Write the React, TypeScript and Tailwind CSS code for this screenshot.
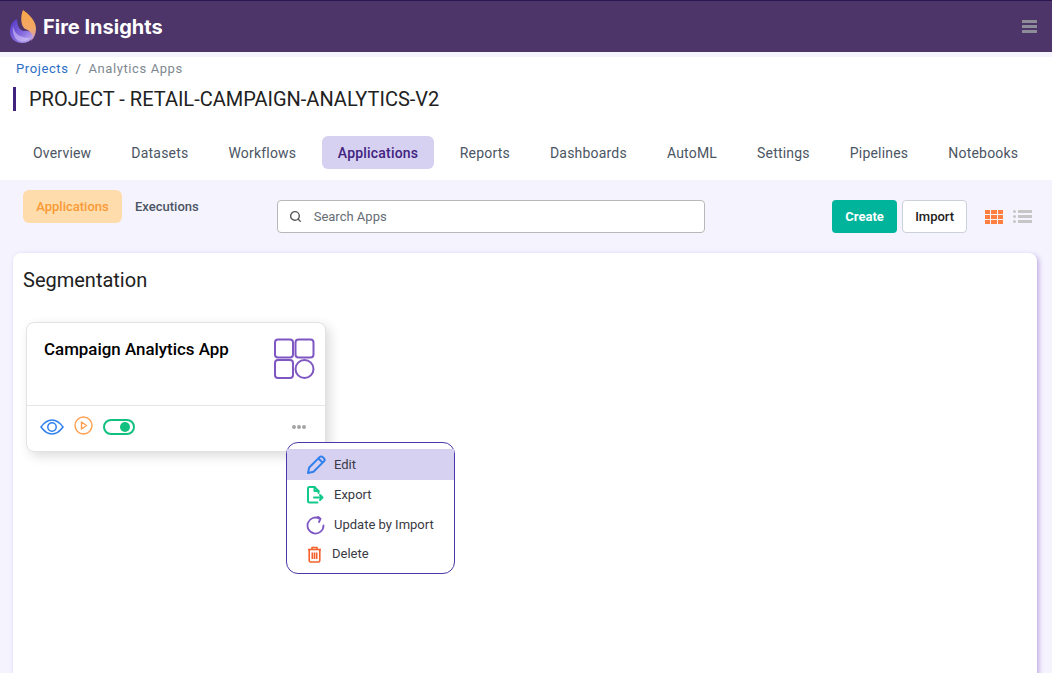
import { Search } from 'lucide-react';

const tabs = ['Overview', 'Datasets', 'Workflows', 'Applications', 'Reports', 'Dashboards', 'AutoML', 'Settings', 'Pipelines', 'Notebooks'];

function Logo() {
  return (
    <svg width="27" height="34" viewBox="0 0 27 34" fill="none">
      <defs>
        <linearGradient id="flame" x1="0.5" y1="0" x2="0.5" y2="1">
          <stop offset="0" stopColor="#f9a645" />
          <stop offset="0.6" stopColor="#f2a868" />
          <stop offset="1" stopColor="#c79ad8" />
        </linearGradient>
        <linearGradient id="ball" x1="0" y1="0" x2="1" y2="1">
          <stop offset="0" stopColor="#4f35c4" />
          <stop offset="0.55" stopColor="#8468e0" />
          <stop offset="1" stopColor="#cbb8f2" />
        </linearGradient>
      </defs>
      <path d="M13 0 C19 4 26 11 26 19 C26 24 24 28 21 31 C23 25 20 20 15 19 C11 16 10 7 13 0 Z" fill="url(#flame)" />
      <path d="M7 9 C2 11 0 16 0 22 C0 29 6 33 12 33 C18 33 22 30 23 26 C21 22 18 20 14 21 C10 21 7 16 7 9 Z" fill="url(#ball)" />
      <path d="M3 16 C4 23 9 28 20 28 C17 31 13 32 9 31 C4 29 2 22 3 16 Z" fill="#d9ccf7" opacity="0.55" />
    </svg>
  );
}

function AppGlyph() {
  return (
    <svg width="41" height="42" viewBox="0 0 41 42" fill="none" stroke="#7e57c2" strokeWidth="2">
      <rect x="1" y="1.5" width="18" height="18" rx="3" />
      <rect x="21.5" y="1.5" width="18" height="18" rx="3" />
      <rect x="1" y="22" width="18" height="18" rx="3" />
      <circle cx="30.5" cy="31" r="9" />
    </svg>
  );
}

function MenuIcon({ kind }: { kind: 'edit' | 'export' | 'update' | 'delete' }) {
  if (kind === 'edit') {
    return (
      <svg width="19" height="19" viewBox="0 0 19 19" fill="none" stroke="#2f80ed" strokeWidth="2" strokeLinejoin="round">
        <path d="M1 18 L2.2 12.5 L12.6 2.1 C13.5 1.2 14.8 1.2 15.7 2.1 L16.9 3.3 C17.8 4.2 17.8 5.5 16.9 6.4 L6.5 16.8 Z" />
        <path d="M11.5 3.5 L15.5 7.5" />
      </svg>
    );
  }
  if (kind === 'export') {
    return (
      <svg width="17" height="18" viewBox="0 0 17 18" fill="none" stroke="#12c98a" strokeWidth="2" strokeLinejoin="round" strokeLinecap="round">
        <path d="M10.5 16.5 H2.5 C1.5 16.5 1 16 1 15 V2.5 C1 1.5 1.5 1 2.5 1 H7.5 L11.5 5 V7" />
        <path d="M7.5 1 V5 H11.5" />
        <path d="M7 11.5 H15.5 M13 9 L15.5 11.5 L13 14" />
      </svg>
    );
  }
  if (kind === 'update') {
    return (
      <svg width="19" height="19" viewBox="0 0 19 19" fill="none" stroke="#7e57c2" strokeWidth="1.8" strokeLinecap="round" strokeLinejoin="round">
        <path d="M17.5 9.5 A8 8 0 1 1 13.5 2.6" />
        <path d="M12 0.8 L14.5 2.8 L13 6" />
      </svg>
    );
  }
  return (
    <svg width="15" height="17" viewBox="0 0 15 17" fill="none" stroke="#f4622d" strokeWidth="1.6" strokeLinejoin="round">
      <path d="M1 3.5 H14" />
      <path d="M5 3.5 V1.5 H10 V3.5" />
      <path d="M2.2 3.5 V14.5 C2.2 15.5 2.7 16 3.7 16 H11.3 C12.3 16 12.8 15.5 12.8 14.5 V3.5" />
      <path d="M5.3 6.5 V13 M7.5 6.5 V13 M9.7 6.5 V13" />
    </svg>
  );
}

export default function App() {
  return (
    <div className="h-[673px] w-[1052px] overflow-hidden bg-white font-['Roboto',sans-serif]">
      {/* HEADER */}
      <header className="flex h-[52px] items-center justify-between border-t border-[#2a1650] bg-[#4d3469] pl-[10px] pr-[15px]">
        <div className="flex items-center gap-[6px]">
          <Logo />
          <span className="font-['Inter',sans-serif] text-[20px] font-bold text-white">Fire Insights</span>
        </div>
        <div className="flex flex-col gap-[2px]">
          <span className="h-[3px] w-[15px] bg-[#8d8d99]" />
          <span className="h-[3px] w-[15px] bg-[#8d8d99]" />
          <span className="h-[3px] w-[15px] bg-[#8d8d99]" />
        </div>
      </header>
      <div className="h-[5px] bg-[#f5f3fe]" />

      {/* BREADCRUMB + TITULO */}
      <div className="flex h-[22px] items-center gap-[7px] pl-4 pt-[1px] text-[13px] tracking-[0.6px]">
        <span className="text-[#2a6fc4]">Projects</span>
        <span className="text-[#6b7280]">/</span>
        <span className="text-[#808890]">Analytics Apps</span>
      </div>
      <div className="mt-2 ml-[13px] flex h-6 items-center border-l-[3px] border-[#41237f] pl-[13px]">
        <h1 className="text-[20px] font-normal leading-6 text-[#212121]">PROJECT - RETAIL-CAMPAIGN-ANALYTICS-V2</h1>
      </div>

      {/* TABS */}
      <nav className="mt-[25px] flex h-[33px] items-center gap-[9px] pl-[17.5px]">
        {tabs.map((tab) => (
          <span
            key={tab}
            className={`flex h-[33px] items-center rounded-md text-sm tracking-[0.2px] ${tab === 'Applications' ? 'mx-[1px] bg-[#d6d0f1] px-4 font-medium text-[#41237f]' : 'px-[15.5px] text-[#4b5563]'}`}
          >
            {tab}
          </span>
        ))}
      </nav>

      {/* PANELL */}
      <div className="mt-[11px] h-[493px] bg-[#f5f3fe] pl-[13px] pr-[15px]">
        <div className="relative flex h-[73px] items-start">
          <div className="ml-[10px] mt-[10px] flex h-[33px] w-[99px] items-center justify-center rounded-md bg-[#fedcac] text-[13px] font-medium text-[#f89a35]">Applications</div>
          <div className="ml-[13px] mt-[10px] flex h-[33px] items-center text-[13px] font-medium text-[#4b5563]">Executions</div>
          <div className="ml-[78px] mt-5 flex h-[33px] w-[428px] items-center rounded border border-[#b8b8b8] bg-white pl-[11px]">
            <Search size={13} strokeWidth={2.6} className="text-[#555]" />
            <span className="ml-3 text-[13px] text-[#666d75]">Search Apps</span>
          </div>
          <div className="ml-auto mt-5 flex items-center">
            <div className="flex h-[33px] w-[65px] items-center justify-center rounded bg-[#00b39b] text-[13px] font-bold text-white">Create</div>
            <div className="ml-[5px] flex h-[33px] w-[65px] items-center justify-center rounded border border-[#ccd0db] bg-white text-[13px] font-medium text-[#212121]">Import</div>
            <div className="ml-[18px] grid grid-cols-3 gap-[1px]">
              {Array.from({ length: 9 }).map((_, i) => (
                <span key={i} className="h-[4px] w-[5.3px] bg-[#ff7f41]" />
              ))}
            </div>
            <div className="ml-[10px] mr-[5px] flex flex-col gap-[2px]">
              {[0, 1, 2].map((i) => (
                <div key={i} className="flex items-center gap-[2px]">
                  <span className="h-[3px] w-[3px] rounded-full bg-[#c6c6c6]" />
                  <span className="h-[3px] w-[14px] bg-[#c6c6c6]" />
                </div>
              ))}
            </div>
          </div>
        </div>

        {/* CONTINGUT */}
        <div className="relative h-[430px] rounded-t-lg bg-white pl-[13px] pt-[15px] shadow-[2px_2px_5px_rgba(126,87,194,0.45)]">
          <h2 className="-ml-[3px] text-xl font-normal leading-6 text-[#212121]">Segmentation</h2>

          <div className="mt-[30px] h-[130px] w-[300px] rounded-lg border border-[#e2e2e2] bg-white shadow-[4px_4px_12px_rgba(0,0,0,0.14)]">
            <div className="flex h-[83px] justify-between border-b border-[#e6e6e6] pl-[17px] pr-[10px] pt-[15px]">
              <span className="text-[16.9px] font-medium leading-[22px] text-black">Campaign Analytics App</span>
              <AppGlyph />
            </div>
            <div className="flex h-[45px] items-center pb-[4px] pl-[13px] pr-[19px]">
              <svg width="24" height="16" viewBox="0 0 24 16" fill="none" stroke="#2f80ed" strokeWidth="1.5">
                <path d="M1 8 C5 2.5 8.5 1 12 1 C15.5 1 19 2.5 23 8 C19 13.5 15.5 15 12 15 C8.5 15 5 13.5 1 8 Z" />
                <circle cx="12" cy="8" r="4.2" />
              </svg>
              <svg className="ml-[10px] -mt-[3px]" width="19" height="19" viewBox="0 0 19 19" fill="none" stroke="#ff9f4f" strokeWidth="1.4" strokeLinejoin="round">
                <circle cx="9.5" cy="9.5" r="8.5" />
                <path d="M7.5 6 L12.5 9.5 L7.5 13 Z" />
              </svg>
              <div className="ml-[10px] flex h-4 w-[32px] items-center justify-end rounded-full border-2 border-[#12c07f] pr-[3px]">
                <span className="h-[10px] w-[10px] rounded-full bg-[#12c07f]" />
              </div>
              <div className="ml-auto mt-[1px] flex gap-[1px]">
                <span className="h-1 w-1 rounded-full bg-[#a5a5a5]" />
                <span className="h-1 w-1 rounded-full bg-[#a5a5a5]" />
                <span className="h-1 w-1 rounded-full bg-[#a5a5a5]" />
              </div>
            </div>
          </div>

          {/* MENU */}
          <div className="absolute left-[273px] top-[189px] h-[132px] w-[169px] rounded-xl border border-[#4a3aa7] bg-white pt-[6px] text-[13px] text-[#3a3a44]">
            <div className="flex h-[31px] items-center bg-[#d6d0f1] pl-[20px]">
              <MenuIcon kind="edit" />
              <span className="ml-[8px]">Edit</span>
            </div>
            <div className="flex h-[29px] items-center pl-[20px]">
              <MenuIcon kind="export" />
              <span className="ml-[10px]">Export</span>
            </div>
            <div className="flex h-[32px] items-center pl-[19px]">
              <MenuIcon kind="update" />
              <span className="ml-[9px]">Update by Import</span>
            </div>
            <div className="flex h-[26px] items-center pl-[20px]">
              <MenuIcon kind="delete" />
              <span className="ml-[10px]">Delete</span>
            </div>
          </div>
        </div>
      </div>
    </div>
  );
}
